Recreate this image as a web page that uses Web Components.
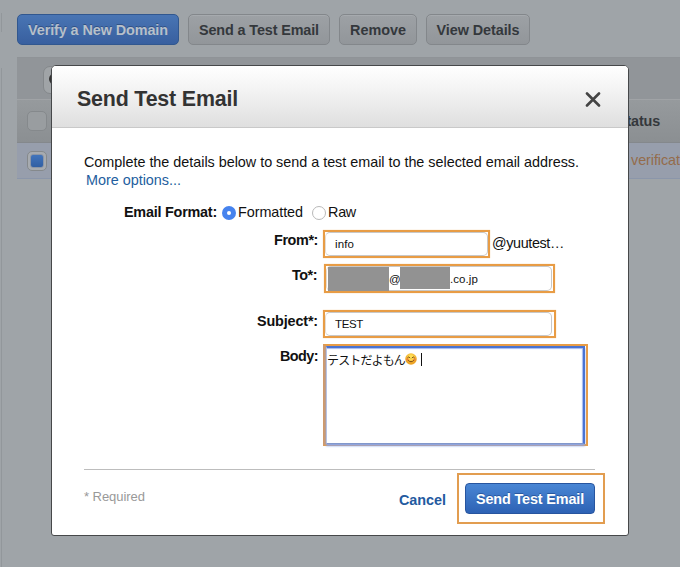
<!DOCTYPE html>
<html lang="en">
<head>
<meta charset="utf-8">
<title>Send Test Email</title>
<style>
html,body{margin:0;height:100%;overflow:hidden;background:#9fa4a8}
body{font-family:"Liberation Sans",Arial,sans-serif;font-size:14.4px;color:#111}
</style>
</head>
<body>
<ses-page></ses-page>
<script>
const define=(name,html,setup)=>{
  const t=document.createElement('template');
  t.innerHTML=html;
  customElements.define(name,class extends HTMLElement{
    constructor(){super();this.attachShadow({mode:'open'}).append(t.content.cloneNode(true));}
    connectedCallback(){if(setup)setup(this,this.shadowRoot);}
  });
};

/* A single line of text spread over the width given in w. */
define('fit-text',`<style>:host{display:inline-block;white-space:nowrap;flex:none}span{display:inline-block;white-space:pre}</style><span></span>`,(el,root)=>{
  const s=root.querySelector('span'),txt=el.getAttribute('text'),w=+el.getAttribute('w');
  s.textContent=txt;
  el.style.width=w+'px';
  s.style.letterSpacing=((w-s.getBoundingClientRect().width)/txt.length)+'px';
});

define('tool-button',`<style>
:host{display:flex;box-sizing:border-box;height:31px;align-items:center;justify-content:center;border:1px solid #83878b;border-radius:5px;background:linear-gradient(#9da1a5,#92969a);color:#34383c;font-weight:bold;box-shadow:inset 0 1px #a6aaae}
:host([primary]){background:linear-gradient(#4975b4,#385f9f);border-color:#31578f;color:#b7c0ca;box-shadow:none;text-shadow:0 -1px #315286}
</style><slot></slot>`);

define('check-box',`<style>
:host{display:block;box-sizing:border-box;width:20px;height:20px;border:1px solid #85898c;border-radius:5px;background:#999da0;padding:2px;flex:none}
:host([checked]){background:#a7abb0}
i{display:none;box-sizing:border-box;width:14px;height:14px;border:1px solid #8c96a6;border-radius:3px;background:linear-gradient(#4274bb,#315fa3)}
:host([checked]) i{display:block}
</style><i></i>`);

define('identity-table',`<style>
:host{display:block}
.search{height:42px;background:#919599;padding:8px 0 0 26px;box-sizing:border-box;border-top:1px solid #8f9397}
.box{width:180px;height:28px;border:1px solid #84888b;border-radius:7px;background:#a0a4a7;box-sizing:border-box;padding:5px}
svg{display:block}
.row{display:flex;align-items:center;box-sizing:border-box;padding-left:10px}
.head{height:44px;background:linear-gradient(#969a9d,#8b8f92);border-top:1px solid #a0a3a6;border-bottom:1px solid #84888c;color:#34383c;font-weight:bold}
.sel{height:36px;background:#979eac;border-bottom:1px solid #8b96aa;color:#946c4b}
.status{margin-left:570px}
.ver{margin:-2px 0 0 584px}
</style>
<div class="search"><div class="box"><svg width="16" height="16" fill="none" stroke="#333" stroke-width="2"><circle cx="6" cy="7" r="5"/><path d="m10 11 4 4"/></svg></div></div>
<div class="row head"><check-box></check-box><fit-text class="status" w="43" text="Status"></fit-text></div>
<div class="row sel"><check-box checked></check-box><fit-text class="ver" w="49" text="verificat"></fit-text></div>`);

define('text-field',`<style>
:host{display:block;box-sizing:border-box;border:2.5px solid #e89c45;background:#fff;font-size:11.5px;box-shadow:0 0 1px #f3c994}
.in{box-sizing:border-box;height:100%;border:1px solid #c8c8c8;border-left-color:#e4dcd2;border-radius:5px;display:flex;align-items:center;padding-left:var(--pad,9px);margin-right:var(--gap,0)}
</style><div class="in"><slot></slot></div>`);

define('text-area',`<style>
:host{display:block;box-sizing:border-box;border:2.5px solid #e89c45;border-left:3px solid #cf9a6c;padding:0 1px 0 0;background:#fff}
.in{box-sizing:border-box;height:100%;border:2px solid #4a73d2;border-left:1px solid #b7c4e4;border-bottom:1px solid #8297cb;padding:3px 0 0 0;display:flex;align-items:center;align-content:flex-start;flex-wrap:wrap;box-shadow:0 2px 2px #8aa5e8,inset -1px 1px 1px #a3b8ef}
fit-text{font:12px "Noto Sans CJK JP",sans-serif;line-height:17px}
.caret{width:1px;height:13px;background:#111;margin-left:4px}
svg{display:block}
</style><div class="in"><fit-text w="78" text="テストだよもん"></fit-text>
<svg width="12" height="12" viewBox="0 0 24 24"><defs><radialGradient id="g" cy=".35"><stop offset=".3" stop-color="#ffdf55"/><stop offset="1" stop-color="#eda323"/></radialGradient></defs><circle cx="12" cy="12" r="11.5" fill="url(#g)"/><g fill="none" stroke="#704115" stroke-width="1.8" stroke-linecap="round"><path d="M5 9.5q2.500-4 5 0M14 9.500q2.500-4 5 0M6 14.500q6 6.500 12 0"/></g><g fill="#ef7040" opacity=".65"><circle cx="5" cy="13" r="2.500"/><circle cx="19" cy="13" r="2.500"/></g></svg><span class="caret"></span></div>`);

define('radio-dot',`<style>
:host{display:block;box-sizing:border-box;width:14px;height:14px;border:1px solid #b9b9b9;border-radius:50%;background:#fff;flex:none}
:host([checked]){border:5px solid #4683ee}
</style>`);

define('form-row',`<style>
:host{display:grid;grid-template-columns:var(--lab,234px) 1fr;column-gap:var(--col,5px)}
.label{display:flex;justify-content:flex-end;align-items:flex-start;font-weight:bold;padding-top:var(--top,2px);line-height:17px}
.value{display:flex;align-items:center}
</style><div class="label"><slot name="label"></slot></div><div class="value"><slot></slot></div>`);

define('modal-header',`<style>
:host{display:flex;box-sizing:border-box;height:62px;align-items:center;justify-content:space-between;padding:5px 27px 0 25px;background:linear-gradient(#fff,#f3f3f3 40%,#dfdfdf);border-bottom:1px solid #c9c9c9;border-radius:4px 4px 0 0}
fit-text{font-size:21.4px;font-weight:bold;color:#333}
svg{display:block}
</style><fit-text w="161" text="Send Test Email"></fit-text><svg width="16" height="16" viewBox="0 0 16 16"><path d="M2 2.500 14 14.500M14 2.500 2 14.500" stroke="#444" stroke-width="2.600" stroke-linecap="round"/></svg>`);

define('modal-footer',`<style>
:host{display:flex;box-sizing:border-box;margin-right:-10px;height:55px;align-items:center}
.req{color:#999;font-size:13px;margin-top:-2px}
.cancel{margin-left:auto;margin-right:11px;color:#235a9f;font-weight:bold;margin-top:5px}
.mark{box-sizing:border-box;border:2px solid #e29d50;width:148px;height:51px;padding:8px 6px;margin-top:2px}
.go{box-sizing:border-box;width:130px;height:31px;border:1px solid #27559f;border-radius:4px;background:linear-gradient(#4986d4,#2d62b5);display:flex;align-items:center;justify-content:center;color:#fff;font-weight:bold;text-shadow:0 -1px #28579f}
</style><fit-text class="req" w="61" text="* Required"></fit-text><fit-text class="cancel" w="47" text="Cancel"></fit-text><div class="mark"><div class="go"><fit-text w="108" text="Send Test Email"></fit-text></div></div>`);

define('send-dialog',`<style>
:host{display:block;box-sizing:border-box;width:578px;height:471px;background:#fff;border:1px solid #46484a;border-radius:5px 5px 3px 3px}
.body{padding:25px 33px 0 32px}
.line{height:18px;line-height:18px}
.more{color:#235e9e;padding-left:2px}
form-row{display:grid}
.mask{background:#929292;flex:none}
hr{border:0;height:1px;background:#bdbdbd;margin:23px 0 0}
</style>
<modal-header></modal-header>
<div class="body">
<div class="line"><fit-text w="495" text="Complete the details below to send a test email to the selected email address."></fit-text></div>
<div class="line more"><fit-text w="95" text="More options..."></fit-text></div>
<form-row style="height:22px;margin-top:12px;--lab:133px;--col:5px;--top:3px"><fit-text slot="label" w="93" text="Email Format:"></fit-text>
 <radio-dot checked style="margin-top:2px"></radio-dot><fit-text style="margin:0 0 0 2px" w="65" text="Formatted"></fit-text><radio-dot style="margin:2px 0 0 9px"></radio-dot><fit-text style="margin:0 0 0 2px" w="28" text="Raw"></fit-text></form-row>
<form-row style="height:28px;margin-top:7px"><fit-text slot="label" w="44" text="From*:"></fit-text>
 <text-field style="width:167px;height:28px"><fit-text w="19" text="info"></fit-text></text-field><fit-text style="margin:-2px 0 0 2px" w="72" text="@yuutest…"></fit-text></form-row>
<form-row style="height:29px;margin-top:6px;--col:6px;--top:3px"><fit-text slot="label" w="25" style="margin-right:1px" text="To*:"></fit-text>
 <text-field style="width:231px;height:29px;--pad:1px;--gap:1px"><span class="mask" style="width:61px;height:24px"></span><fit-text w="11" text="@"></fit-text><span class="mask" style="width:50px;height:22px;margin-bottom:2px"></span><fit-text w="28" text=".co.jp"></fit-text></text-field></form-row>
<form-row style="height:28px;margin-top:17px;--top:3px"><fit-text slot="label" w="61" text="Subject*:"></fit-text>
 <text-field style="width:233px;height:28px;--gap:2px"><fit-text w="28" text="TEST"></fit-text></text-field></form-row>
<form-row style="height:103px;margin-top:5px;--top:5px"><fit-text slot="label" w="38" text="Body:"></fit-text>
 <text-area style="width:265px;height:102px"></text-area></form-row>
<hr>
<modal-footer></modal-footer>
</div>`);

define('ses-page',`<style>
:host{display:block;position:relative;width:680px;height:567px;overflow:hidden;background:#9fa4a8}
.page{display:grid;grid-template-columns:2px 663px;column-gap:15px;height:100%}
.side{display:grid;grid-template-rows:13px 19px 36px 1fr}
.side i:nth-child(even){border-right:1px solid #92979b}
.bar{display:flex;gap:9px;padding:14px 0 12px}
send-dialog{position:absolute;left:51px;top:65px}
</style>
<div class="page"><div class="side"><i></i><i></i><i></i><i></i></div>
<main><div class="bar">
<tool-button primary style="width:162px"><fit-text w="140" text="Verify a New Domain"></fit-text></tool-button>
<tool-button style="width:142px"><fit-text w="120" text="Send a Test Email"></fit-text></tool-button>
<tool-button style="width:78px"><fit-text w="56" text="Remove"></fit-text></tool-button>
<tool-button style="width:104px"><fit-text w="83" text="View Details"></fit-text></tool-button>
</div><identity-table></identity-table></main></div>
<send-dialog></send-dialog>`);
</script>
</body>
</html>
